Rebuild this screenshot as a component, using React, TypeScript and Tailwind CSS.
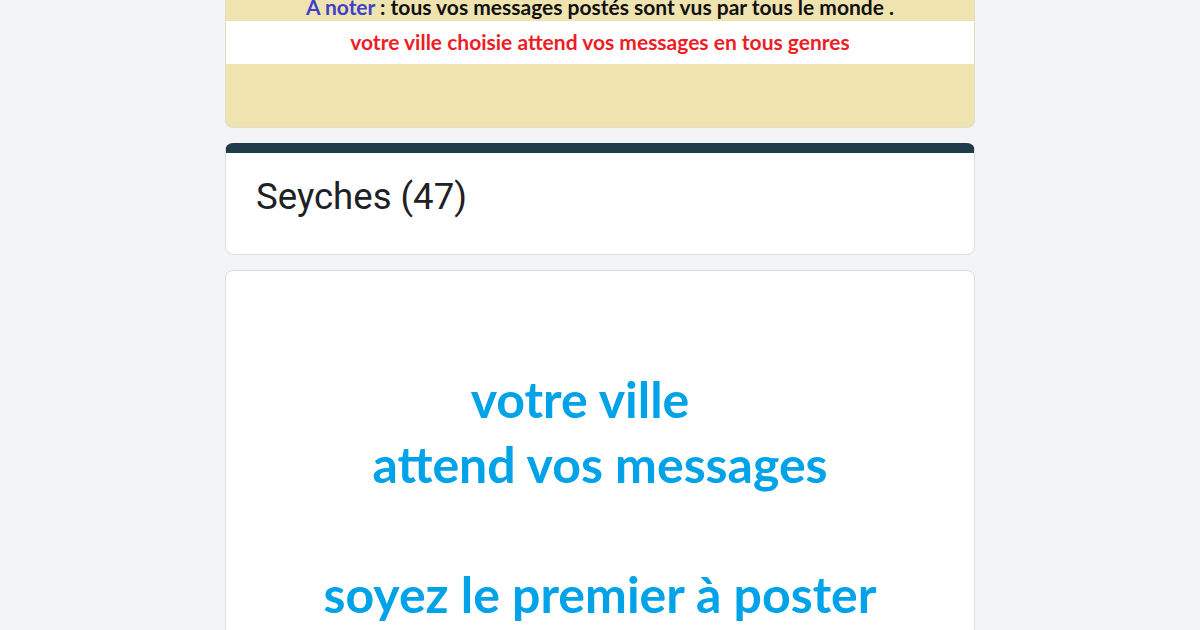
export default function App() {
  return (
    <div className="min-h-[630px] w-full bg-[#f3f4f6] overflow-hidden">
      <div className="mx-auto flex w-[750px] flex-col gap-[15px]">
        {/* notice card */}
        <div className="overflow-hidden rounded-b-lg border border-t-0 border-[#e2dcc0] bg-[#efe3b0] font-['Lato',sans-serif] font-bold">
          <div className="h-[21px] overflow-hidden">
            <p className="-mt-[6px] text-center text-[21px] leading-[26px] text-[#111]">
              <span className="text-[#4040cc]">À noter</span> : tous vos messages postés sont vus par tous le monde .
            </p>
          </div>
          <div className="flex h-[43px] items-center justify-center bg-white pb-[1px] text-[21px] text-[#ee1c25]">
            votre ville choisie attend vos messages en tous genres
          </div>
          <div className="h-[63px]" />
        </div>

        {/* title card */}
        <div className="h-[112px] rounded-lg border border-[#dadce0] border-t-[10px] border-t-[#203b4a] bg-white pl-[30px] pt-[22px]">
          <h1 className="font-['Roboto',sans-serif] text-[36.6px] leading-[44px] text-[#202124]">Seyches (47)</h1>
        </div>

        {/* message card */}
        <div className="h-[400px] rounded-lg border border-[#dadce0] bg-white pt-[96px] text-center font-['Lato',sans-serif] text-[50px] font-bold leading-[65px] text-[#00a2e8]">
          <p className="pr-[40px]">votre ville</p>
          <p>attend vos messages</p>
          <p>&nbsp;</p>
          <p>soyez le premier à poster</p>
        </div>
      </div>
    </div>
  );
}
